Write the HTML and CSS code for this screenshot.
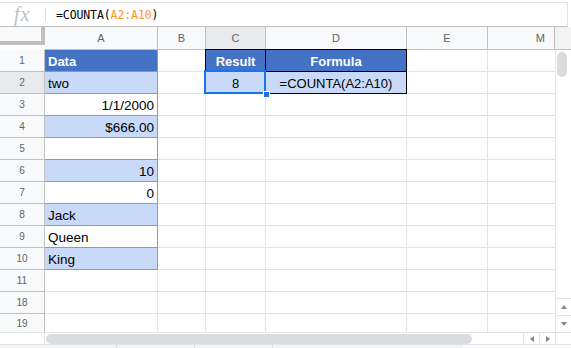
FILE: index.html
```html
<!DOCTYPE html>
<html lang="en">
<head>
    <meta charset="UTF-8">
    <title>COUNTA - Google Sheets</title>
    <link rel="stylesheet" href="styles.css">
</head>
<body>
    <div class="sheet">
        <div class="formula-bar">
            <span class="fx">fx</span>
            <span class="fx-sep"></span>
            <span class="formula">=COUNTA(<span class="ref">A2:A10</span>)</span>
        </div>

        <div class="col-headers">
            <div class="corner"></div>
            <div class="col-head">A</div>
            <div class="col-head">B</div>
            <div class="col-head active">C</div>
            <div class="col-head">D</div>
            <div class="col-head">E</div>
            <div class="col-head col-m">M</div>
            <div class="col-head scroll-head"></div>
        </div>

        <div class="grid-body">
            <div class="rows">
                <div class="row">
                    <div class="row-head">1</div>
                    <div class="cell data head">Data</div>
                    <div class="cell"></div>
                    <div class="cell tbl tbl-head">Result</div>
                    <div class="cell tbl tbl-head">Formula</div>
                    <div class="cell"></div>
                    <div class="cell"></div>
                </div>
                <div class="row">
                    <div class="row-head active">2</div>
                    <div class="cell data band">two</div>
                    <div class="cell"></div>
                    <div class="cell tbl tbl-row center selected">8<span class="handle"></span></div>
                    <div class="cell tbl tbl-row center">=COUNTA(A2:A10)</div>
                    <div class="cell"></div>
                    <div class="cell"></div>
                </div>
                <div class="row">
                    <div class="row-head">3</div>
                    <div class="cell data right">1/1/2000</div>
                    <div class="cell"></div>
                    <div class="cell"></div>
                    <div class="cell"></div>
                    <div class="cell"></div>
                    <div class="cell"></div>
                </div>
                <div class="row">
                    <div class="row-head">4</div>
                    <div class="cell data band right">$666.00</div>
                    <div class="cell"></div>
                    <div class="cell"></div>
                    <div class="cell"></div>
                    <div class="cell"></div>
                    <div class="cell"></div>
                </div>
                <div class="row">
                    <div class="row-head">5</div>
                    <div class="cell data"></div>
                    <div class="cell"></div>
                    <div class="cell"></div>
                    <div class="cell"></div>
                    <div class="cell"></div>
                    <div class="cell"></div>
                </div>
                <div class="row">
                    <div class="row-head">6</div>
                    <div class="cell data band right">10</div>
                    <div class="cell"></div>
                    <div class="cell"></div>
                    <div class="cell"></div>
                    <div class="cell"></div>
                    <div class="cell"></div>
                </div>
                <div class="row">
                    <div class="row-head">7</div>
                    <div class="cell data right">0</div>
                    <div class="cell"></div>
                    <div class="cell"></div>
                    <div class="cell"></div>
                    <div class="cell"></div>
                    <div class="cell"></div>
                </div>
                <div class="row">
                    <div class="row-head">8</div>
                    <div class="cell data band">Jack</div>
                    <div class="cell"></div>
                    <div class="cell"></div>
                    <div class="cell"></div>
                    <div class="cell"></div>
                    <div class="cell"></div>
                </div>
                <div class="row">
                    <div class="row-head">9</div>
                    <div class="cell data">Queen</div>
                    <div class="cell"></div>
                    <div class="cell"></div>
                    <div class="cell"></div>
                    <div class="cell"></div>
                    <div class="cell"></div>
                </div>
                <div class="row">
                    <div class="row-head">10</div>
                    <div class="cell data band">King</div>
                    <div class="cell"></div>
                    <div class="cell"></div>
                    <div class="cell"></div>
                    <div class="cell"></div>
                    <div class="cell"></div>
                </div>
                <div class="row">
                    <div class="row-head">11</div>
                    <div class="cell"></div>
                    <div class="cell"></div>
                    <div class="cell"></div>
                    <div class="cell"></div>
                    <div class="cell"></div>
                    <div class="cell"></div>
                </div>
                <div class="row">
                    <div class="row-head">18</div>
                    <div class="cell"></div>
                    <div class="cell"></div>
                    <div class="cell"></div>
                    <div class="cell"></div>
                    <div class="cell"></div>
                    <div class="cell"></div>
                </div>
                <div class="row last">
                    <div class="row-head">19</div>
                    <div class="cell"></div>
                    <div class="cell"></div>
                    <div class="cell"></div>
                    <div class="cell"></div>
                    <div class="cell"></div>
                    <div class="cell"></div>
                </div>
            </div>

            <div class="vscroll">
                <div class="v-thumb"></div>
                <div class="v-arrows">
                    <div class="arrow-box"><span class="tri up"></span></div>
                    <div class="arrow-box"><span class="tri down"></span></div>
                </div>
            </div>
        </div>

        <div class="hscroll">
            <div class="h-left"></div>
            <div class="h-track"><div class="h-thumb"></div></div>
            <div class="arrow-box h"><span class="tri left"></span></div>
            <div class="arrow-box h"><span class="tri right"></span></div>
            <div class="h-corner"></div>
        </div>

        <div class="tabs">
            <div class="tab"></div>
            <div class="tab"></div>
            <div class="tab"></div>
            <div class="tab light"></div>
        </div>
    </div>
</body>
</html>
```

FILE: styles.css
```css
:root {
    --grid-line: #e2e3e3;
    --head-line: #c0c0c0;
    --head-bg: #f8f9fa;
    --head-active: #e8eaed;
    --head-text: #5f6368;
    --dark-blue: #4472c4;
    --light-blue: #c9daf8;
    --band-line: #6d9eeb;
    --select: #1a73e8;
}

* {
    box-sizing: border-box;
}

body {
    margin: 0;
    background: #fff;
    font-family: 'Liberation Sans', Arial, sans-serif;
    font-size: 13px;
    color: #000;
    overflow: hidden;
}

.sheet {
    width: 571px;
    height: 348px;
    display: flex;
    flex-direction: column;
    overflow: hidden;
}

/* formula bar */
.formula-bar {
    height: 25px;
    margin: 2px 3px 0 0;
    border-top: 1px solid var(--grid-line);
    border-bottom: 1px solid var(--head-line);
    border-right: 1px solid var(--grid-line);
    display: flex;
    align-items: center;
    flex-shrink: 0;
}

.fx {
    width: 45px;
    padding-left: 14px;
    font-family: 'Liberation Serif', serif;
    font-style: italic;
    font-size: 20px;
    color: #bdc1c6;
    letter-spacing: 1px;
}

.fx-sep {
    width: 1px;
    height: 14px;
    background: #dadce0;
}

.formula {
    padding-left: 10px;
    font-family: 'DejaVu Sans Mono', monospace;
    font-size: 11.5px;
    letter-spacing: -0.1px;
    color: #000;
}

.ref {
    color: #f7981d;
}

/* column headers */
.col-headers {
    display: grid;
    grid-template-columns: 45px 113px 48px 60px 141px 81px 67px 16px;
    height: 23px;
    flex-shrink: 0;
}

.corner {
    background: var(--head-bg);
    border-right: 4px solid var(--head-line);
    border-bottom: 4px solid var(--head-line);
    margin-bottom: 5px;
}

.col-head {
    background: var(--head-bg);
    border-right: 1px solid var(--head-line);
    border-bottom: 1px solid var(--head-line);
    color: var(--head-text);
    font-size: 11px;
    display: flex;
    align-items: center;
    justify-content: center;
}

.col-head.active {
    background: var(--head-active);
}

.col-head.col-m {
    justify-content: flex-end;
    padding-right: 9px;
}

.scroll-head {
    border-right: none;
    background: #f3f3f3;
}

/* grid body */
.grid-body {
    display: flex;
    flex-shrink: 0;
}

.rows {
    width: 555px;
}

.row {
    display: grid;
    grid-template-columns: 45px 113px 48px 60px 141px 81px 67px;
    height: 22px;
}

.row.last {
    height: 18px;
}

.row-head {
    background: var(--head-bg);
    border-right: 1px solid var(--head-line);
    border-bottom: 1px solid var(--head-line);
    color: var(--head-text);
    font-size: 10px;
    display: flex;
    align-items: center;
    justify-content: center;
}

.row-head.active {
    background: var(--head-active);
}

.row.last .row-head,
.row.last .cell {
    border-bottom: none;
}

.cell {
    border-right: 1px solid var(--grid-line);
    border-bottom: 1px solid var(--grid-line);
    padding: 1px 3px 0;
    display: flex;
    align-items: center;
    white-space: nowrap;
}

.cell:last-child {
    border-right: none;
}

.cell.data {
    border-right-color: var(--band-line);
    border-bottom-color: var(--band-line);
    font-size: 13.5px;
}

.cell.band {
    background: var(--light-blue);
}

.cell.head {
    background: var(--dark-blue);
    color: #fff;
    font-weight: bold;
    font-size: 13px;
}

.cell.right {
    justify-content: flex-end;
}

.cell.center {
    justify-content: center;
}

.cell.tbl {
    border-right-color: #000;
    border-bottom-color: #000;
}

.row .cell.tbl:nth-child(4) {
    box-shadow: -1px 0 0 #000;
}

.row:first-child .cell.tbl {
    box-shadow: 0 -1px 0 #000;
}

.row:first-child .cell.tbl:nth-child(4) {
    box-shadow: -1px 0 0 #000, 0 -1px 0 #000, -1px -1px 0 #000;
}

.cell.tbl-head {
    background: var(--dark-blue);
    color: #fff;
    font-weight: bold;
    justify-content: center;
}

.cell.tbl-row {
    background: var(--light-blue);
}

.cell.selected {
    position: relative;
}

.cell.selected::before {
    content: "";
    position: absolute;
    left: -2px;
    top: -2px;
    right: -1px;
    bottom: -1px;
    border: 2px solid var(--select);
}

.handle {
    position: absolute;
    right: -5px;
    bottom: -5px;
    width: 7px;
    height: 7px;
    background: var(--select);
    border: 1px solid #fff;
}

/* vertical scrollbar */
.vscroll {
    width: 16px;
    border-left: 1px solid var(--grid-line);
    display: flex;
    flex-direction: column;
    justify-content: space-between;
}

.v-thumb {
    width: 10px;
    height: 25px;
    margin: 2px 0 0 1px;
    border-radius: 5px;
    background: #dadce0;
}

.arrow-box {
    height: 17px;
    border-top: 1px solid var(--grid-line);
    display: flex;
    align-items: center;
    justify-content: center;
}

.tri {
    width: 0;
    height: 0;
    border: 3px solid transparent;
}

.tri.up {
    border-bottom: 4px solid #80868b;
    border-top: none;
}

.tri.down {
    border-top: 4px solid #80868b;
    border-bottom: none;
}

.tri.left {
    border-right: 4px solid #80868b;
    border-left: none;
}

.tri.right {
    border-left: 4px solid #80868b;
    border-right: none;
}

/* horizontal scrollbar */
.hscroll {
    display: flex;
    height: 12px;
    border-top: 1px solid var(--grid-line);
    flex-shrink: 0;
}

.h-left {
    width: 45px;
    border-right: 1px solid var(--grid-line);
}

.h-track {
    width: 478px;
    padding: 1px 0 0 1px;
}

.h-thumb {
    width: 426px;
    height: 10px;
    border-radius: 5px;
    background: #dadce0;
}

.arrow-box.h {
    width: 16px;
    height: auto;
    border-top: none;
    border-left: 1px solid var(--grid-line);
}

.h-corner {
    flex: 1;
    border-left: 1px solid var(--grid-line);
}

/* sheet tabs strip */
.tabs {
    flex: 1;
    display: flex;
    background: #f1f3f4;
    border-top: 1px solid var(--grid-line);
}

.tab {
    width: 78px;
    border-right: 1px solid #e0e0e0;
}

.tab:first-child {
    width: 117px;
}

.tab.light {
    flex: 1;
    margin-left: 190px;
    background: #f8f9fa;
    border-right: none;
}
```
